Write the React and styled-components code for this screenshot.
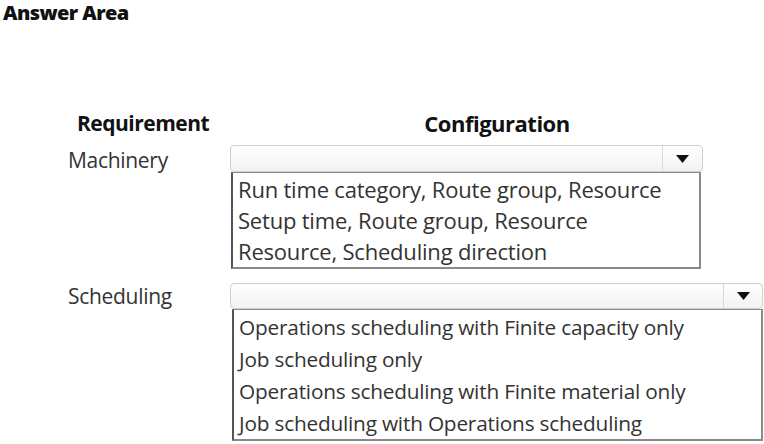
import React from "react";
import styled, { createGlobalStyle } from "styled-components";

const Global = createGlobalStyle`
  html, body { margin: 0; padding: 0; background: #fff; }
  body { font-family: "Open Sans", "Noto Sans", sans-serif; color: #333; }
`;

const Page = styled.div`
  width: 764px;
  height: 444px;
  overflow: hidden;
  background: #fff;
`;

const Title = styled.div`
  padding: 1px 0 0 3px;
  font-size: 20px;
  line-height: 24px;
  font-weight: 800;
  color: #111;
  letter-spacing: -0.6px;
  height: 104px;
`;

const Grid = styled.div`
  display: grid;
  grid-template-columns: 162px 534px;
  margin-left: 68px;
`;

const HeadCell = styled.div`
  font-size: ${p => p.$fs}px;
  font-weight: 700;
  color: #111;
  height: 36px;
  line-height: 36px;
  padding-left: ${p => p.$pl || 0}px;
  text-align: ${p => p.$center ? "center" : "left"};
  letter-spacing: -0.5px;
`;

const Label = styled.div`
  font-size: 21px;
  color: #333;
  padding-top: ${p => p.$pt}px;
  line-height: 24px;
  letter-spacing: -0.3px;
`;

const Select = styled.div`
  display: flex;
  flex-direction: column;
  width: ${p => p.$w}px;
  margin-top: ${p => p.$mt}px;
  margin-bottom: ${p => p.$mb || 0}px;
`;

const Box = styled.div`
  display: flex;
  height: ${p => p.$h}px;
  box-sizing: border-box;
  border: 1px solid #d0d0d0;
  border-radius: 4px;
  background: linear-gradient(#ffffff, #f2f2f2);
`;

const Field = styled.div`
  flex: 1;
`;

const Arrow = styled.div`
  width: ${p => p.$w}px;
  border-left: 1px solid #d8d8d8;
  display: flex;
  align-items: center;
  justify-content: center;
`;

const List = styled.div`
  margin-left: ${p => p.$ml}px;
  width: ${p => p.$w}px;
  box-sizing: border-box;
  border: 2px solid #8a8a8a;
  border-top-width: 1px;
  border-left-color: #555;
  background: #fff;
  display: flex;
  flex-direction: column;
  padding: ${p => p.$pt}px 0 0 5px;
`;

const Item = styled.div`
  font-size: ${p => p.$fs}px;
  height: ${p => p.$h}px;
  line-height: ${p => p.$h}px;
  color: #333;
  white-space: nowrap;
  letter-spacing: -0.2px;
`;

const Tri = () => (
  <svg width="13" height="8" viewBox="0 0 13 8">
    <polygon points="0,0 13,0 6.5,8" fill="#111" />
  </svg>
);

export default function App() {
  return (
    <Page>
      <Global />
      <Title>Answer Area</Title>
      <Grid>
        <HeadCell $fs={21} $pl={9}>Requirement</HeadCell>
        <HeadCell $fs={22} $center>Configuration</HeadCell>

        <Label $pt={7}>Machinery</Label>
        <Select $w={473} $mt={4} $mb={14}>
          <Box $h={27}>
            <Field />
            <Arrow $w={39}><Tri /></Arrow>
          </Box>
          <List $ml={1} $w={470} $pt={1}>
            <Item $fs={22} $h={31}>Run time category, Route group, Resource</Item>
            <Item $fs={22} $h={31}>Setup time, Route group, Resource</Item>
            <Item $fs={22} $h={31}>Resource, Scheduling direction</Item>
          </List>
        </Select>

        <Label $pt={1}>Scheduling</Label>
        <Select $w={533} $mt={0}>
          <Box $h={26}>
            <Field />
            <Arrow $w={38}><Tri /></Arrow>
          </Box>
          <List $ml={2} $w={531} $pt={1}>
            <Item $fs={20.8} $h={32}>Operations scheduling with Finite capacity only</Item>
            <Item $fs={20.8} $h={32}>Job scheduling only</Item>
            <Item $fs={20.8} $h={32}>Operations scheduling with Finite material only</Item>
            <Item $fs={20.8} $h={32}>Job scheduling with Operations scheduling</Item>
          </List>
        </Select>
      </Grid>
    </Page>
  );
}
